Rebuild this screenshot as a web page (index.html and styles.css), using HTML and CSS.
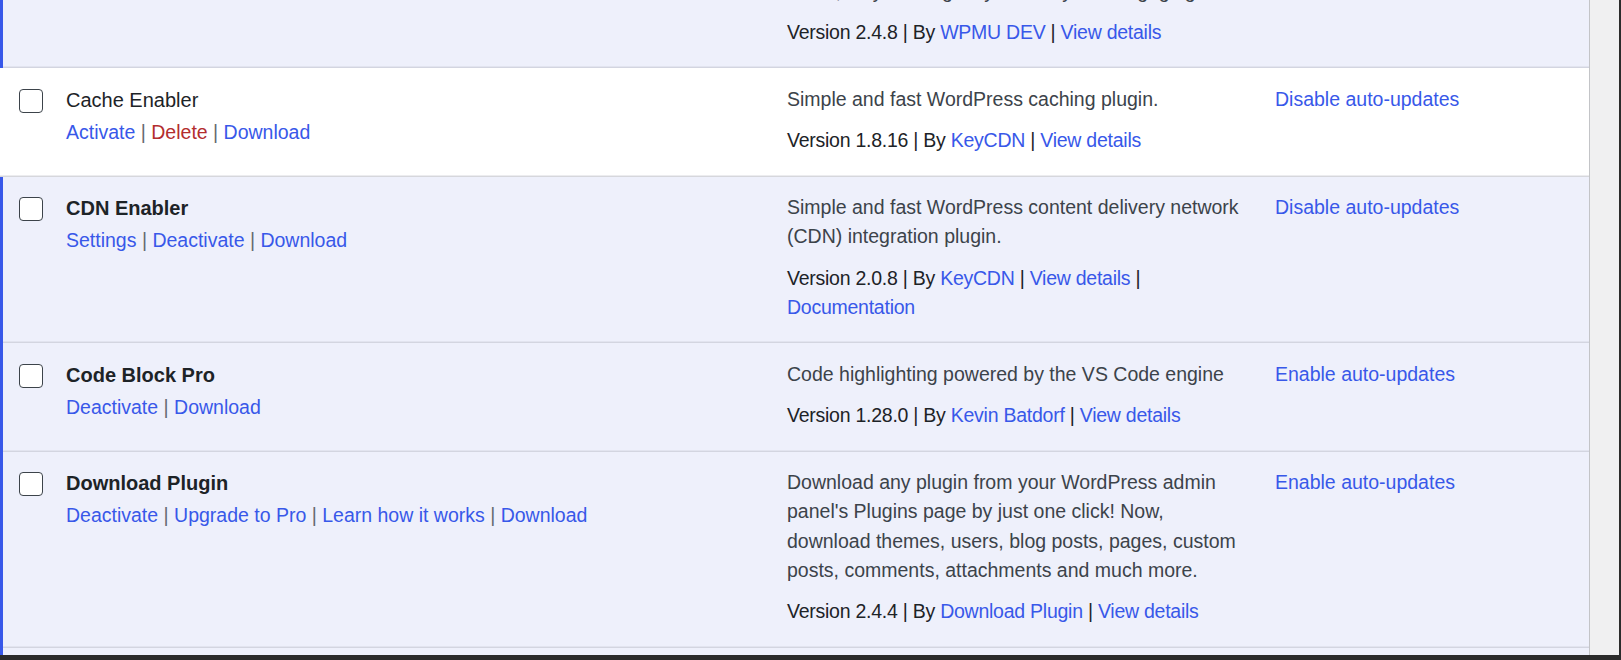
FILE: index.html
```html
<!DOCTYPE html>
<html lang="en">
<head>
<meta charset="utf-8">
<title>Plugins</title>
<link rel="stylesheet" href="styles.css">
</head>
<body>
<div class="window">
  <div class="viewport">
    <div class="plugin-list">

      <!-- row scrolled mostly out of view: only its last lines remain -->
      <div class="plugin active">
        <div class="cell check"></div>
        <div class="cell title"></div>
        <div class="cell desc">
          <p class="summary">Checks your blog for broken links and missing images and notifies you on the dashboard if any are found, so your blog stays healthy and engaging.</p>
          <p class="meta">Version 2.4.8 | By <a href="#">WPMU DEV</a> | <a href="#">View details</a></p>
        </div>
        <div class="cell auto"></div>
      </div>

      <div class="plugin">
        <div class="cell check"><span class="box"></span></div>
        <div class="cell title">
          <strong class="name">Cache Enabler</strong>
          <div class="actions"><a href="#">Activate</a><span class="sep"> | </span><a href="#" class="delete">Delete</a><span class="sep"> | </span><a href="#">Download</a></div>
        </div>
        <div class="cell desc">
          <p class="summary">Simple and fast WordPress caching plugin.</p>
          <p class="meta">Version 1.8.16 | By <a href="#">KeyCDN</a> | <a href="#">View details</a></p>
        </div>
        <div class="cell auto"><a href="#">Disable auto-updates</a></div>
      </div>

      <div class="plugin active">
        <div class="cell check"><span class="box"></span></div>
        <div class="cell title">
          <strong class="name">CDN Enabler</strong>
          <div class="actions"><a href="#">Settings</a><span class="sep"> | </span><a href="#">Deactivate</a><span class="sep"> | </span><a href="#">Download</a></div>
        </div>
        <div class="cell desc">
          <p class="summary">Simple and fast WordPress content delivery network (CDN) integration plugin.</p>
          <p class="meta">Version 2.0.8 | By <a href="#">KeyCDN</a> | <a href="#">View details</a> | <a href="#">Documentation</a></p>
        </div>
        <div class="cell auto"><a href="#">Disable auto-updates</a></div>
      </div>

      <div class="plugin active">
        <div class="cell check"><span class="box"></span></div>
        <div class="cell title">
          <strong class="name">Code Block Pro</strong>
          <div class="actions"><a href="#">Deactivate</a><span class="sep"> | </span><a href="#">Download</a></div>
        </div>
        <div class="cell desc">
          <p class="summary">Code highlighting powered by the VS Code engine</p>
          <p class="meta">Version 1.28.0 | By <a href="#">Kevin Batdorf</a> | <a href="#">View details</a></p>
        </div>
        <div class="cell auto"><a href="#">Enable auto-updates</a></div>
      </div>

      <div class="plugin active">
        <div class="cell check"><span class="box"></span></div>
        <div class="cell title">
          <strong class="name">Download Plugin</strong>
          <div class="actions"><a href="#">Deactivate</a><span class="sep"> | </span><a href="#">Upgrade to Pro</a><span class="sep"> | </span><a href="#">Learn how it works</a><span class="sep"> | </span><a href="#">Download</a></div>
        </div>
        <div class="cell desc">
          <p class="summary">Download any plugin from your WordPress admin panel's Plugins page by just one click! Now, download themes, users, blog posts, pages, custom posts, comments, attachments and much more.</p>
          <p class="meta">Version 2.4.4 | By <a href="#">Download Plugin</a> | <a href="#">View details</a></p>
        </div>
        <div class="cell auto"><a href="#">Enable auto-updates</a></div>
      </div>

      <!-- next row, only its top edge is in view -->
      <div class="plugin active stub"></div>

    </div>
  </div>
  <div class="gutter-line"></div>
  <div class="gutter"></div>
  <div class="edge"></div>
  <div class="taskbar"></div>
</div>
</body>
</html>
```

FILE: styles.css
```css
* {
  box-sizing: border-box;
}

html,
body {
  margin: 0;
  height: 100%;
}

body {
  background: #2b2b2b;
  font-family: "Liberation Sans", Arial, sans-serif;
  color: #1d2327;
  overflow: hidden;
}

/* window frame: list area, scroll gutter, dark edge and bottom bar */
.window {
  display: grid;
  grid-template-columns: 1589px 1px 29px 2px;
  grid-template-rows: 655px 5px;
  width: 1621px;
  height: 660px;
}

.viewport {
  overflow: hidden;
  background: #fff;
}

.gutter-line {
  background: #c3c4c7;
}

.gutter {
  background: #f0f0f1;
}

.edge {
  background: #2b2b2b;
}

.taskbar {
  grid-column: 1 / -1;
  background: #2b2b2b;
}

/* list scrolled so the first row shows only its last lines */
.plugin-list {
  margin-top: -98.5px;
}

.plugin {
  display: grid;
  grid-template-columns: 51px 721px 488px 1fr;
  background: #fff;
  box-shadow: inset 0 -1px 0 #d6d7dc, inset 0 -2px 0 #ececef;
}

.plugin.active {
  background: #eef0fb;
  box-shadow: inset 3px 0 0 #3858e9, inset 0 -1px 0 #d3d5e0, inset 0 -2px 0 #e2e4ef;
}

.plugin.stub {
  height: 60px;
}

.cell {
  padding: 16.5px 15px 21.25px;
  font-size: 19.5px;
  line-height: 29.25px;
}

.check {
  padding-left: 18.5px;
  padding-right: 0;
}

.box {
  display: block;
  width: 24px;
  height: 24px;
  margin-top: 4px;
  border: 1px solid #3c434a;
  border-radius: 4px;
  background: #fff;
}

.name {
  display: block;
  font-size: 20px;
  line-height: 31px;
  margin-bottom: 2px;
  font-weight: 400;
  color: #1d2327;
  white-space: nowrap;
}

.active .name {
  font-weight: 700;
}

.actions {
  white-space: nowrap;
}

.sep {
  color: #646970;
}

a {
  color: #3858e9;
  text-decoration: none;
}

a.delete {
  color: #b32d2e;
}

.desc p {
  margin: 0;
}

.desc .summary {
  color: #3c434a;
  margin-bottom: 12px;
}

.meta {
  color: #1d2327;
  letter-spacing: -0.25px;
}
```
